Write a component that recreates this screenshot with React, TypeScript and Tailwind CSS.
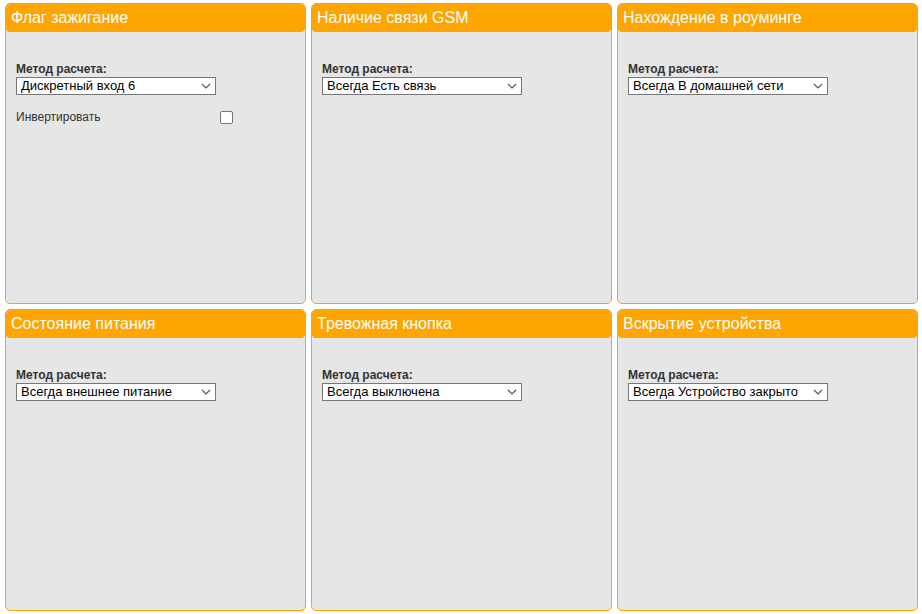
type Panel = {
  title: string;
  value: string;
  invert?: boolean;
};

const panels: Panel[] = [
  { title: "Флаг зажигание", value: "Дискретный вход 6", invert: true },
  { title: "Наличие связи GSM", value: "Всегда Есть связь" },
  { title: "Нахождение в роуминге", value: "Всегда В домашней сети" },
  { title: "Состояние питания", value: "Всегда внешнее питание" },
  { title: "Тревожная кнопка", value: "Всегда выключена" },
  { title: "Вскрытие устройства", value: "Всегда Устройство закрыто" },
];

const Chevron = () => (
  <svg
    width="10"
    height="6"
    viewBox="0 0 10 6"
    className="pointer-events-none absolute right-[5px] top-[6px]"
  >
    <path d="M1 1 L5 5 L9 1" fill="none" stroke="#555" strokeWidth="1.2" />
  </svg>
);

const SensorPanel = ({ panel }: { panel: Panel }) => {
  return (
    <div className="flex flex-col overflow-hidden rounded-[5px] border border-[#ffa500] bg-[#e6e6e6]">
      <div className="flex h-[28px] shrink-0 items-center rounded-[4px] bg-[#ffa500] px-[5px] text-[16px] text-white">
        {panel.title}
      </div>
      <div className="flex flex-col px-[10px] pt-[31px]">
        <label className="text-[12px] font-bold leading-[13px] text-[#333]">
          Метод расчета:
        </label>
        <div className="relative mt-px w-[200px]">
          <select
            defaultValue={panel.value}
            className="block h-[18px] w-[200px] appearance-none border border-[#767676] bg-white pl-[4px] text-[13px] leading-[16px] text-black outline-none"
          >
            <option>{panel.value}</option>
          </select>
          <Chevron />
        </div>
        {panel.invert && (
          <div className="mt-[16px] flex items-center">
            <span className="w-[204px] text-[12px] leading-[13px] text-[#333]">
              Инвертировать
            </span>
            <span className="block h-[13px] w-[13px] rounded-[2px] border border-[#767676] bg-white" />
          </div>
        )}
      </div>
    </div>
  );
};

export default function App() {
  return (
    <div
      className="h-[614px] w-[922px] bg-white pl-[5px] pr-[4px] pt-[3px]"
      style={{ fontFamily: '"Liberation Sans", Arial, sans-serif' }}
    >
      <div className="grid grid-cols-3 grid-rows-[301px_302px] gap-x-[5px] gap-y-[5px]">
        {panels.map((p) => (
          <SensorPanel key={p.title} panel={p} />
        ))}
      </div>
    </div>
  );
}
